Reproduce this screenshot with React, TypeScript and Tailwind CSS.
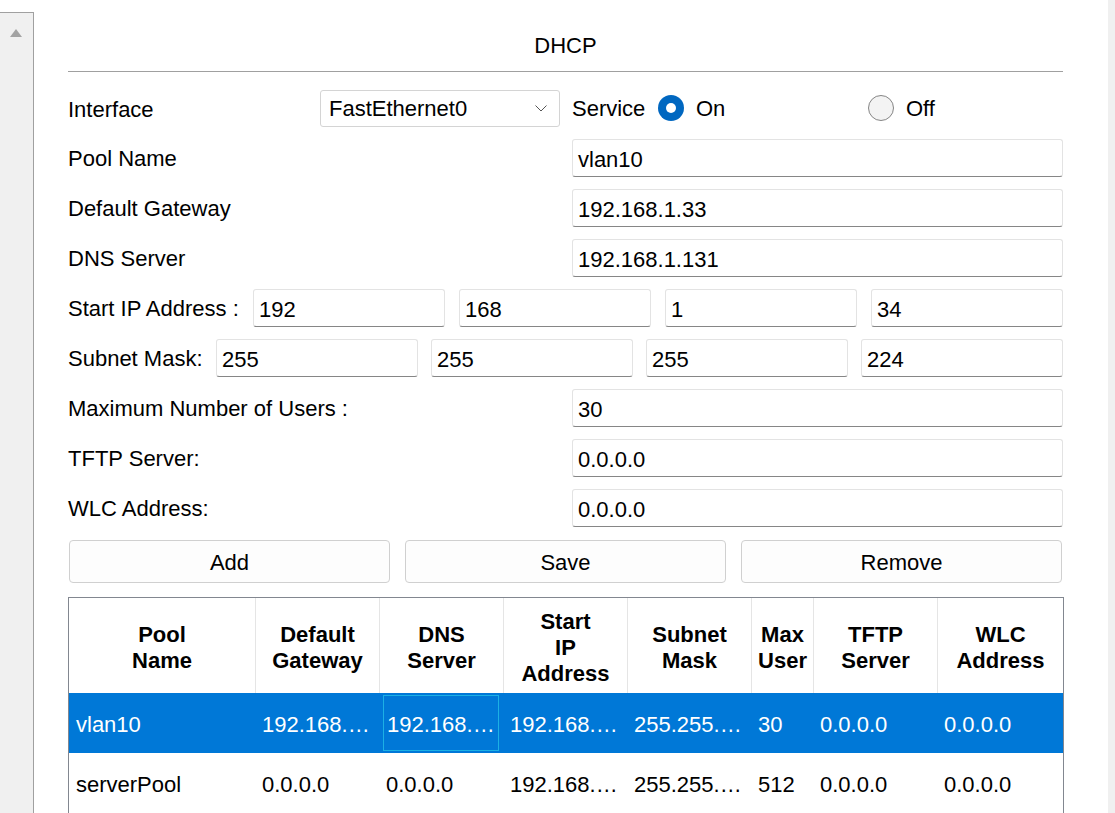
import React from "react";

const font = { fontFamily: '"Liberation Sans", Arial, sans-serif' };

function TextBox({ value, className = "" }: { value: string; className?: string }) {
  return (
    <div
      className={
        "h-[38px] bg-white border border-[#e3e3e3] border-b-[#868686] rounded-[3px] flex items-center pl-[5px] pt-[3px] " +
        className
      }
    >
      <span>{value}</span>
    </div>
  );
}

function FieldRow({ label, value }: { label: string; value: string }) {
  return (
    <div className="flex items-center h-[38px]">
      <div className="w-[504px] pt-[2px]">{label}</div>
      <TextBox value={value} className="w-[491px]" />
    </div>
  );
}

const cols = [
  { w: "w-[187px]", h: ["Pool", "Name"] },
  { w: "w-[124px]", h: ["Default", "Gateway"] },
  { w: "w-[124px]", h: ["DNS", "Server"] },
  { w: "w-[124px]", h: ["Start", "IP", "Address"] },
  { w: "w-[124px]", h: ["Subnet", "Mask"] },
  { w: "w-[62px]", h: ["Max", "User"] },
  { w: "w-[124px]", h: ["TFTP", "Server"] },
  { w: "w-[125px]", h: ["WLC", "Address"] },
];

const rows = [
  ["vlan10", "192.168.1.33", "192.168.1.131", "192.168.1.34", "255.255.255.224", "30", "0.0.0.0", "0.0.0.0"],
  ["serverPool", "0.0.0.0", "0.0.0.0", "192.168.1.0", "255.255.255.0", "512", "0.0.0.0", "0.0.0.0"],
];

export default function App() {
  return (
    <div
      className="w-[1115px] h-[813px] overflow-hidden bg-white flex text-black text-[22px] leading-[26px]"
      style={font}
    >
      {/* left scrollbar */}
      <div className="w-[34px] shrink-0 pt-[12px]">
        <div className="h-full bg-[#f0f0f0] border-t border-r border-[#a0a0a0] flex justify-center pt-[16px]">
          <svg width="12" height="8" viewBox="0 0 12 8" className="-ml-[2px]">
            <polygon points="6,0 12,8 0,8" fill="#a3a3a3" />
          </svg>
        </div>
      </div>

      {/* main */}
      <div className="w-[995px] ml-[34px] shrink-0 flex flex-col">
        <div className="pt-[33px] h-[60px] text-center">DHCP</div>
        <div className="mt-[12px] h-px bg-[#a0a0a0]" />

        <div className="mt-[17px] flex flex-col gap-[12px]">
          {/* interface row */}
          <div className="flex items-center h-[38px]">
            <div className="w-[252px] pt-[3px]">Interface</div>
            <div className="w-[240px] h-[37px] border border-[#d4d4d4] rounded-[3px] bg-white flex items-center pl-[8px] pr-[12px]">
              <span className="flex-1 pt-[2px]">FastEthernet0</span>
              <svg width="12" height="7" viewBox="0 0 12 7">
                <polyline points="0.5,0.5 6,6 11.5,0.5" fill="none" stroke="#555" strokeWidth="1" />
              </svg>
            </div>
            <div className="w-[86px] ml-[12px] pt-[1px]">Service</div>
            <div className="w-[26px] h-[26px] rounded-full bg-[#0067c0] flex items-center justify-center">
              <div className="w-[10px] h-[10px] rounded-full bg-white" />
            </div>
            <div className="w-[184px] pl-[12px] pt-[2px]">On</div>
            <div className="w-[26px] h-[26px] rounded-full bg-[#f3f3f3] border border-[#858585]" />
            <div className="pl-[12px] pt-[2px]">Off</div>
          </div>

          <FieldRow label="Pool Name" value="vlan10" />
          <FieldRow label="Default Gateway" value="192.168.1.33" />
          <FieldRow label="DNS Server" value="192.168.1.131" />

          <div className="flex items-center h-[38px]">
            <div className="w-[185px] pt-[2px]">Start IP Address :</div>
            <div className="flex-1 flex gap-[14px]">
              <TextBox value="192" className="flex-1" />
              <TextBox value="168" className="flex-1" />
              <TextBox value="1" className="flex-1" />
              <TextBox value="34" className="flex-1" />
            </div>
          </div>

          <div className="flex items-center h-[38px]">
            <div className="w-[148px] pt-[2px]">Subnet Mask:</div>
            <div className="flex-1 flex gap-[13px]">
              <TextBox value="255" className="flex-1" />
              <TextBox value="255" className="flex-1" />
              <TextBox value="255" className="flex-1" />
              <TextBox value="224" className="flex-1" />
            </div>
          </div>

          <FieldRow label="Maximum Number of Users :" value="30" />
          <FieldRow label="TFTP Server:" value="0.0.0.0" />
          <FieldRow label="WLC Address:" value="0.0.0.0" />
        </div>

        {/* buttons */}
        <div className="mt-[13px] flex gap-[15px] pl-px pr-px">
          {["Add", "Save", "Remove"].map((b) => (
            <div
              key={b}
              className="flex-1 h-[43px] bg-[#fdfdfd] border border-[#d0d0d0] rounded-[4px] flex items-center justify-center pt-[2px]"
            >
              {b}
            </div>
          ))}
        </div>

        {/* table */}
        <div className="mt-[14px] w-[996px] border-t border-l border-r border-[#828790] flex-1">
          <div className="flex h-[95px]">
            {cols.map((c, i) => (
              <div
                key={i}
                className={
                  c.w +
                  " shrink-0 flex flex-col items-center justify-center font-bold text-center pt-[4px] " +
                  (i < cols.length - 1 ? "border-r border-[#e5e5e5]" : "")
                }
              >
                {c.h.map((t) => (
                  <div key={t}>{t}</div>
                ))}
              </div>
            ))}
          </div>
          {rows.map((r, ri) => (
            <div
              key={ri}
              className={"flex h-[60px] " + (ri === 0 ? "bg-[#0078d7] text-white" : "bg-white text-black")}
            >
              {r.map((v, ci) => (
                <div key={ci} className={cols[ci].w + " shrink-0 flex items-center pt-[3px]"}>
                  {ri === 0 && ci === 2 ? (
                    <div className="ml-[3px] -mt-[3px] w-[116px] h-[56px] border border-[#1cb0e4] flex items-center pl-[3px] pr-[2px] pt-[3px] overflow-hidden">
                      <span className="truncate">{v}</span>
                    </div>
                  ) : (
                    <span className={"truncate pr-[4px] " + (ci === 0 ? "pl-[7px]" : "pl-[6px]")}>{v}</span>
                  )}
                </div>
              ))}
            </div>
          ))}
        </div>
      </div>

      <div className="flex-1" />
      <div className="w-[7px] shrink-0 bg-[#f0f0f0]" />
    </div>
  );
}
